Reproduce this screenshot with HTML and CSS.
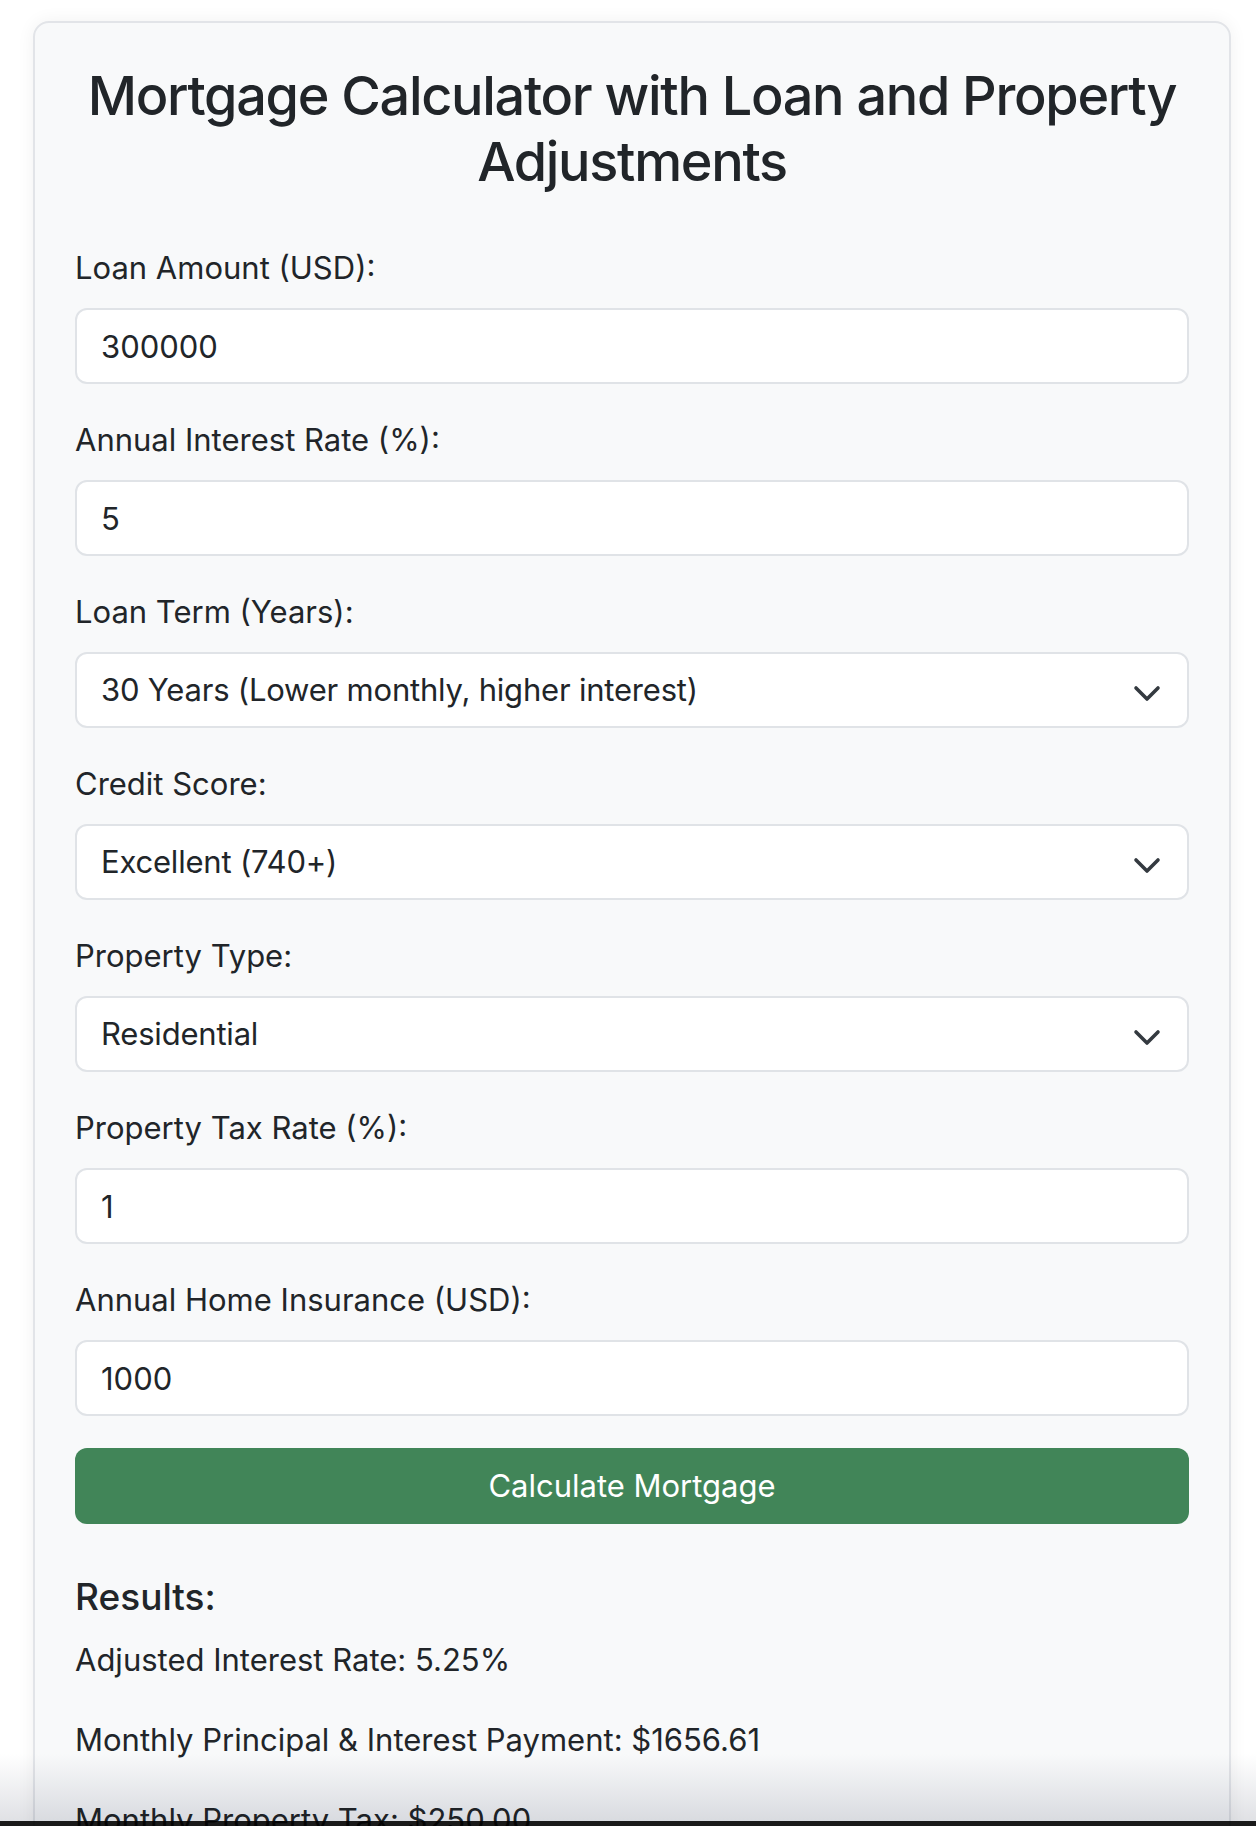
FILE: index.html
```html
<!DOCTYPE html>
<html lang="en">
<head>
<meta charset="utf-8">
<title>Mortgage Calculator</title>
<link rel="stylesheet" href="styles.css">
</head>
<body>
<div class="page">
  <div class="card">
    <h1 class="title">Mortgage Calculator with Loan and Property Adjustments</h1>
    <form class="form">
      <div class="field">
        <label class="label" for="loan">Loan Amount (USD):</label>
        <input class="control" id="loan" type="text" value="300000">
      </div>
      <div class="field">
        <label class="label" for="rate">Annual Interest Rate (%):</label>
        <input class="control" id="rate" type="text" value="5">
      </div>
      <div class="field">
        <label class="label" for="term">Loan Term (Years):</label>
        <select class="control select" id="term">
          <option>30 Years (Lower monthly, higher interest)</option>
          <option>15 Years (Higher monthly, lower interest)</option>
        </select>
      </div>
      <div class="field">
        <label class="label" for="credit">Credit Score:</label>
        <select class="control select" id="credit">
          <option>Excellent (740+)</option>
          <option>Good (670-739)</option>
          <option>Fair (580-669)</option>
          <option>Poor (below 580)</option>
        </select>
      </div>
      <div class="field">
        <label class="label" for="ptype">Property Type:</label>
        <select class="control select" id="ptype">
          <option>Residential</option>
          <option>Commercial</option>
        </select>
      </div>
      <div class="field">
        <label class="label" for="tax">Property Tax Rate (%):</label>
        <input class="control" id="tax" type="text" value="1">
      </div>
      <div class="field">
        <label class="label" for="ins">Annual Home Insurance (USD):</label>
        <input class="control" id="ins" type="text" value="1000">
      </div>
      <button class="btn" type="button">Calculate Mortgage</button>
    </form>
    <div class="results">
      <h2 class="results-title">Results:</h2>
      <p class="result">Adjusted Interest Rate: 5.25%</p>
      <p class="result">Monthly Principal &amp; Interest Payment: $1656.61</p>
      <p class="result">Monthly Property Tax: $250.00</p>
      <p class="result">Monthly Home Insurance: $83.33</p>
      <p class="result">Total Monthly Payment: $1989.94</p>
    </div>
  </div>
</div>
<div class="fade"></div>
</body>
</html>
```

FILE: styles.css
```css
* { box-sizing: border-box; }

html, body {
  margin: 0;
  padding: 0;
  background: #ffffff;
}

body {
  font-family: Inter, "Noto Sans", "Liberation Sans", sans-serif;
  color: #212529;
  font-size: 31px;
  line-height: 48px;
}

.page {
  padding: 21px 25px 40px 33px;
}

.card {
  width: 1198px;
  background: #f8f9fa;
  border: 2px solid #e2e4e8;
  border-radius: 16px;
  padding: 40px;
  box-shadow: 0 0 18px rgba(0, 0, 0, 0.06);
}

.title {
  margin: 0 0 49px 0;
  font-size: 54px;
  line-height: 66px;
  font-weight: 500;
  letter-spacing: -1.3px;
  text-align: center;
  color: #212529;
}

.form {
  display: flex;
  flex-direction: column;
}

.field {
  display: flex;
  flex-direction: column;
  margin-bottom: 32px;
}

.label {
  display: block;
  margin-bottom: 16px;
  font-size: 31px;
  line-height: 48px;
}

.control {
  display: block;
  width: 100%;
  height: 76px;
  padding: 12px 24px;
  font-family: inherit;
  font-size: 31px;
  line-height: 48px;
  color: #212529;
  background-color: #ffffff;
  border: 2px solid #e0e3e7;
  border-radius: 12px;
  outline: none;
}

.select {
  appearance: none;
  -webkit-appearance: none;
  padding-right: 72px;
  letter-spacing: -0.2px;
  background-image: url("data:image/svg+xml,%3csvg xmlns='http://www.w3.org/2000/svg' viewBox='0 0 16 12'%3e%3cpath fill='none' stroke='%23343a40' stroke-linecap='round' stroke-linejoin='round' stroke-width='1.8' d='m2.5 5 5.5 5.5 5.5-5.5'/%3e%3c/svg%3e");
  background-repeat: no-repeat;
  background-position: right 24px center;
  background-size: 32px 24px;
}

.btn {
  display: block;
  width: 100%;
  height: 76px;
  padding: 12px 24px;
  font-family: inherit;
  font-size: 31px;
  line-height: 48px;
  color: #ffffff;
  background: #418558;
  border: 0;
  border-radius: 12px;
  text-align: center;
}

.results {
  margin-top: 51px;
}

.results-title {
  margin: 0 0 17px 0;
  font-size: 37px;
  line-height: 44px;
  font-weight: 500;
  letter-spacing: 0;
}

.result {
  margin: 0 0 32px 0;
  font-size: 31px;
  line-height: 48px;
}

.fade {
  position: fixed;
  left: 0;
  right: 0;
  bottom: 0;
  height: 72px;
  background: linear-gradient(to bottom, rgba(255, 255, 255, 1) 0%, rgb(224, 225, 229) 100%);
  mix-blend-mode: multiply;
  border-bottom: 5px solid #1a1a1a;
  pointer-events: none;
}
```
